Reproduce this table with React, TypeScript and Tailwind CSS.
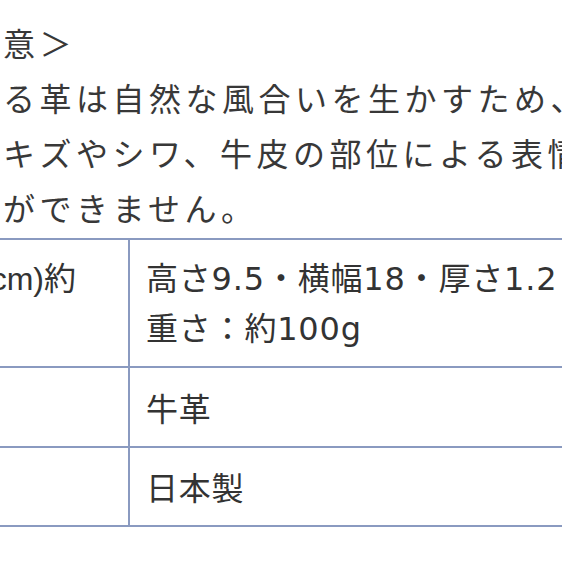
import React from "react";

const font = { fontFamily: '"Noto Sans CJK JP", "Noto Sans", sans-serif' };
const tableFont = { fontFamily: '"DejaVu Sans", "Noto Sans CJK JP", sans-serif' };
const leftFont = { fontFamily: '"Liberation Sans", "Noto Sans CJK JP", sans-serif' };

export default function App() {
  const lines = [
    "意＞",
    "る革は自然な風合いを生かすため、あ",
    "キズやシワ、牛皮の部位による表情が",
    "ができません。",
  ];
  return (
    <div
      className="w-[562px] h-[562px] overflow-hidden bg-white text-[#383838]"
      style={font}
    >
      <div className="pt-[15px] pl-[3px] text-[32px] leading-[55px] tracking-[4.5px] font-normal">
        {lines.map((l, i) => (
          <div key={i} className="whitespace-nowrap">
            {l}
          </div>
        ))}
      </div>
      <div
        className="mt-[3px] w-[600px] border-t-2 border-[#8a9ac0] text-[32px] text-[#333] tracking-[0.8px]"
        style={tableFont}
      >
        <div className="flex border-b-2 border-[#8a9ac0]">
          <div
            className="w-[130px] shrink-0 overflow-hidden flex justify-end pr-[52px] pt-[14px] pb-[12px] leading-[50px] border-r-2 border-[#8a9ac0] whitespace-nowrap tracking-normal"
            style={leftFont}
          >
            サイズ(cm)約
          </div>
          <div className="flex-1 pl-[16px] pt-[14px] pb-[12px] leading-[50px] whitespace-nowrap">
            <div>高さ9.5・横幅18・厚さ1.2</div>
            <div>重さ：約100g</div>
          </div>
        </div>
        <div className="flex border-b-2 border-[#8a9ac0]">
          <div className="w-[130px] shrink-0 border-r-2 border-[#8a9ac0]" />
          <div className="flex-1 pl-[16px] pt-[17px] pb-[11px] leading-[50px]">牛革</div>
        </div>
        <div className="flex border-b-2 border-[#8a9ac0]">
          <div className="w-[130px] shrink-0 border-r-2 border-[#8a9ac0]" />
          <div className="flex-1 pl-[16px] pt-[16px] pb-[11px] leading-[50px]">日本製</div>
        </div>
      </div>
    </div>
  );
}
